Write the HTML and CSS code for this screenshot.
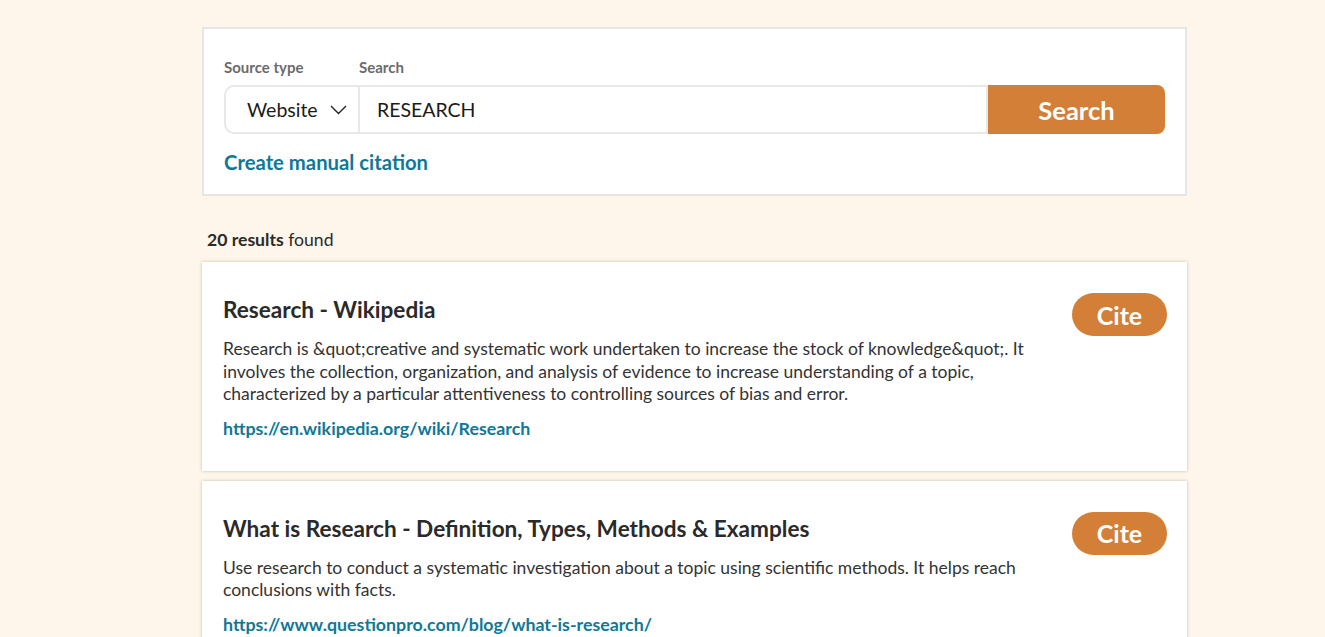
FILE: index.html
```html
<!DOCTYPE html>
<html lang="en">
<head>
    <meta charset="UTF-8">
    <meta name="viewport" content="width=device-width, initial-scale=1.0">
    <title>Search sources</title>
    <link rel="stylesheet" href="styles.css">
</head>
<body>
    <main class="page">
        <div class="search-box">
            <div class="labels">
                <span class="label label-type">Source type</span>
                <span class="label">Search</span>
            </div>
            <div class="search-row">
                <div class="select">
                    <span>Website</span>
                    <svg width="17" height="10" viewBox="0 0 17 10"><path d="M1 1l7.5 7.5L16 1" fill="none" stroke="#222" stroke-width="1.4"/></svg>
                </div>
                <div class="query">RESEARCH</div>
                <button class="search-button">Search</button>
            </div>
            <a class="manual-link" href="#">Create manual citation</a>
        </div>

        <p class="count"><b>20 results</b> found</p>

        <div class="result">
            <div class="result-body">
                <h3>Research - Wikipedia</h3>
                <p>Research is &amp;quot;creative and systematic work undertaken to increase the stock of knowledge&amp;quot;. It involves the collection, organization, and analysis of evidence to increase understanding of a topic, characterized by a particular attentiveness to controlling sources of bias and error.</p>
                <a href="#">https://en.wikipedia.org/wiki/Research</a>
            </div>
            <button class="cite-button">Cite</button>
        </div>

        <div class="result">
            <div class="result-body">
                <h3>What is Research - Definition, Types, Methods &amp; Examples</h3>
                <p>Use research to conduct a systematic investigation about a topic using scientific methods. It helps reach conclusions with facts.</p>
                <a href="#">https://www.questionpro.com/blog/what-is-research/</a>
            </div>
            <button class="cite-button">Cite</button>
        </div>
    </main>
</body>
</html>
```
FILE: styles.css
```css
body {
    margin: 0;
    background-color: #fef6ea;
    font-family: Lato, "Open Sans", sans-serif;
    color: #2a2a2a;
}
.page {
    width: 985px;
    margin-left: 202px;
    padding-top: 27px;
}
.search-box {
    background: white;
    border: 2px solid #e6e6e6;
    padding: 29px 20px 20px 20px;
}
.labels {
    display: flex;
    font-size: 15px;
    line-height: 18px;
    font-weight: bold;
    color: #6b6b6b;
    margin-bottom: 9px;
}
.label-type {
    width: 135px;
}
.search-row {
    display: flex;
    height: 49px;
}
.select {
    display: flex;
    align-items: center;
    gap: 12px;
    width: 136px;
    box-sizing: border-box;
    padding-left: 21px;
    border: 2px solid #e8e8e8;
    border-radius: 10px 0 0 10px;
    font-size: 19.5px;
    color: #1a1a1a;
}
.query {
    flex: 1;
    display: flex;
    align-items: center;
    padding-left: 17px;
    border: 2px solid #e8e8e8;
    border-left: none;
    font-size: 19.5px;
    color: #1a1a1a;
}
.search-button {
    width: 177px;
    background-color: #d47f37;
    color: white;
    border: none;
    border-radius: 0 8px 8px 0;
    font-family: inherit;
    font-size: 25.5px;
    font-weight: bold;
}
.manual-link {
    display: inline-block;
    margin-top: 16px;
    font-size: 20.3px;
    line-height: 24px;
    font-weight: bold;
    color: #0f7898;
    text-decoration: none;
}
.count {
    margin: 34px 0 12px 5px;
    font-size: 17.6px;
    line-height: 20px;
}
.result {
    display: flex;
    justify-content: space-between;
    align-items: flex-start;
    background: white;
    box-shadow: 0 0 3px rgba(80, 60, 30, 0.3);
    padding: 31px 20px 32px 21px;
    margin-bottom: 10px;
}
.result-body {
    width: 830px;
}
.result h3 {
    margin: 3px 0 15px 0;
    font-size: 22.6px;
    line-height: 27px;
    color: #2a2a2a;
}
.result p {
    margin: 0 0 11px 0;
    font-size: 17.5px;
    line-height: 22.5px;
    color: #333;
}
.result a {
    display: block;
    font-size: 17.8px;
    line-height: 22px;
    font-weight: bold;
    color: #0f7898;
    text-decoration: none;
}
.cite-button {
    width: 95px;
    height: 43px;
    background-color: #d47f37;
    color: white;
    border: none;
    border-radius: 22px;
    font-family: inherit;
    font-size: 25px;
    font-weight: bold;
}
```
